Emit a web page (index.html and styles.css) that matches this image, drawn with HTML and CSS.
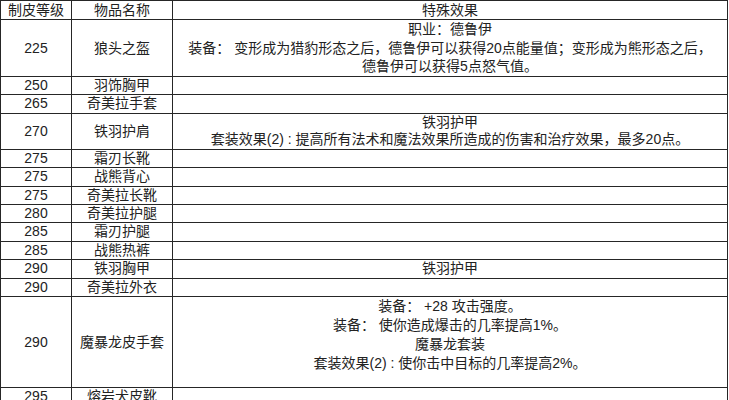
FILE: index.html
```html
<!DOCTYPE html>
<html lang="zh-CN">
<head>
<meta charset="utf-8">
<title>制皮</title>
<link rel="stylesheet" href="styles.css">
</head>
<body>
<table class="grid">
  <colgroup>
    <col class="c1">
    <col class="c2">
    <col class="c3">
  </colgroup>
  <tr class="head"><td>制皮等级</td><td>物品名称</td><td>特殊效果</td></tr>
  <tr class="r3"><td>225</td><td>狼头之盔</td><td>职业：德鲁伊<br>装备： 变形成为猎豹形态之后，德鲁伊可以获得20点能量值；变形成为熊形态之后，<br>德鲁伊可以获得5点怒气值。</td></tr>
  <tr><td>250</td><td>羽饰胸甲</td><td></td></tr>
  <tr><td>265</td><td>奇美拉手套</td><td></td></tr>
  <tr class="r2"><td>270</td><td>铁羽护肩</td><td>铁羽护甲<br>套装效果(2) : 提高所有法术和魔法效果所造成的伤害和治疗效果，最多20点。</td></tr>
  <tr><td>275</td><td>霜刃长靴</td><td></td></tr>
  <tr><td>275</td><td>战熊背心</td><td></td></tr>
  <tr><td>275</td><td>奇美拉长靴</td><td></td></tr>
  <tr><td>280</td><td>奇美拉护腿</td><td></td></tr>
  <tr><td>285</td><td>霜刃护腿</td><td></td></tr>
  <tr><td>285</td><td>战熊热裤</td><td></td></tr>
  <tr><td>290</td><td>铁羽胸甲</td><td>铁羽护甲</td></tr>
  <tr><td>290</td><td>奇美拉外衣</td><td></td></tr>
  <tr class="r5"><td>290</td><td>魔暴龙皮手套</td><td class="top">装备： +28 攻击强度。<br>装备： 使你造成爆击的几率提高1%。<br>魔暴龙套装<br>套装效果(2) : 使你击中目标的几率提高2%。</td></tr>
  <tr><td>295</td><td>熔岩犬皮靴</td><td></td></tr>
</table>
</body>
</html>
```
FILE: styles.css
```css
html, body {
  margin: 0;
  padding: 0;
  background: #ffffff;
}
.grid {
  border-collapse: collapse;
  table-layout: fixed;
  width: 727px;
  font-family: "Liberation Sans", "Noto Sans CJK SC", sans-serif;
  font-size: 14px;
  color: #222222;
}
.c1 { width: 71px; }
.c2 { width: 101px; }
.c3 { width: 555px; }
.grid td {
  border: 1px solid #262626;
  padding: 0;
  height: 17.4px;
  line-height: 17.4px;
  text-align: center;
  vertical-align: middle;
  white-space: nowrap;
  overflow: hidden;
}
.grid tr.head td { height: 18px; line-height: 18px; }
.grid tr.r3 td { height: 56px; line-height: 18.6px; }
.grid tr.r2 td { height: 35px; line-height: 17.4px; }
.grid tr.r5 td { height: 90px; line-height: 19px; }
.grid tr.r5 td.top { vertical-align: top; padding-top: 0; }
```
